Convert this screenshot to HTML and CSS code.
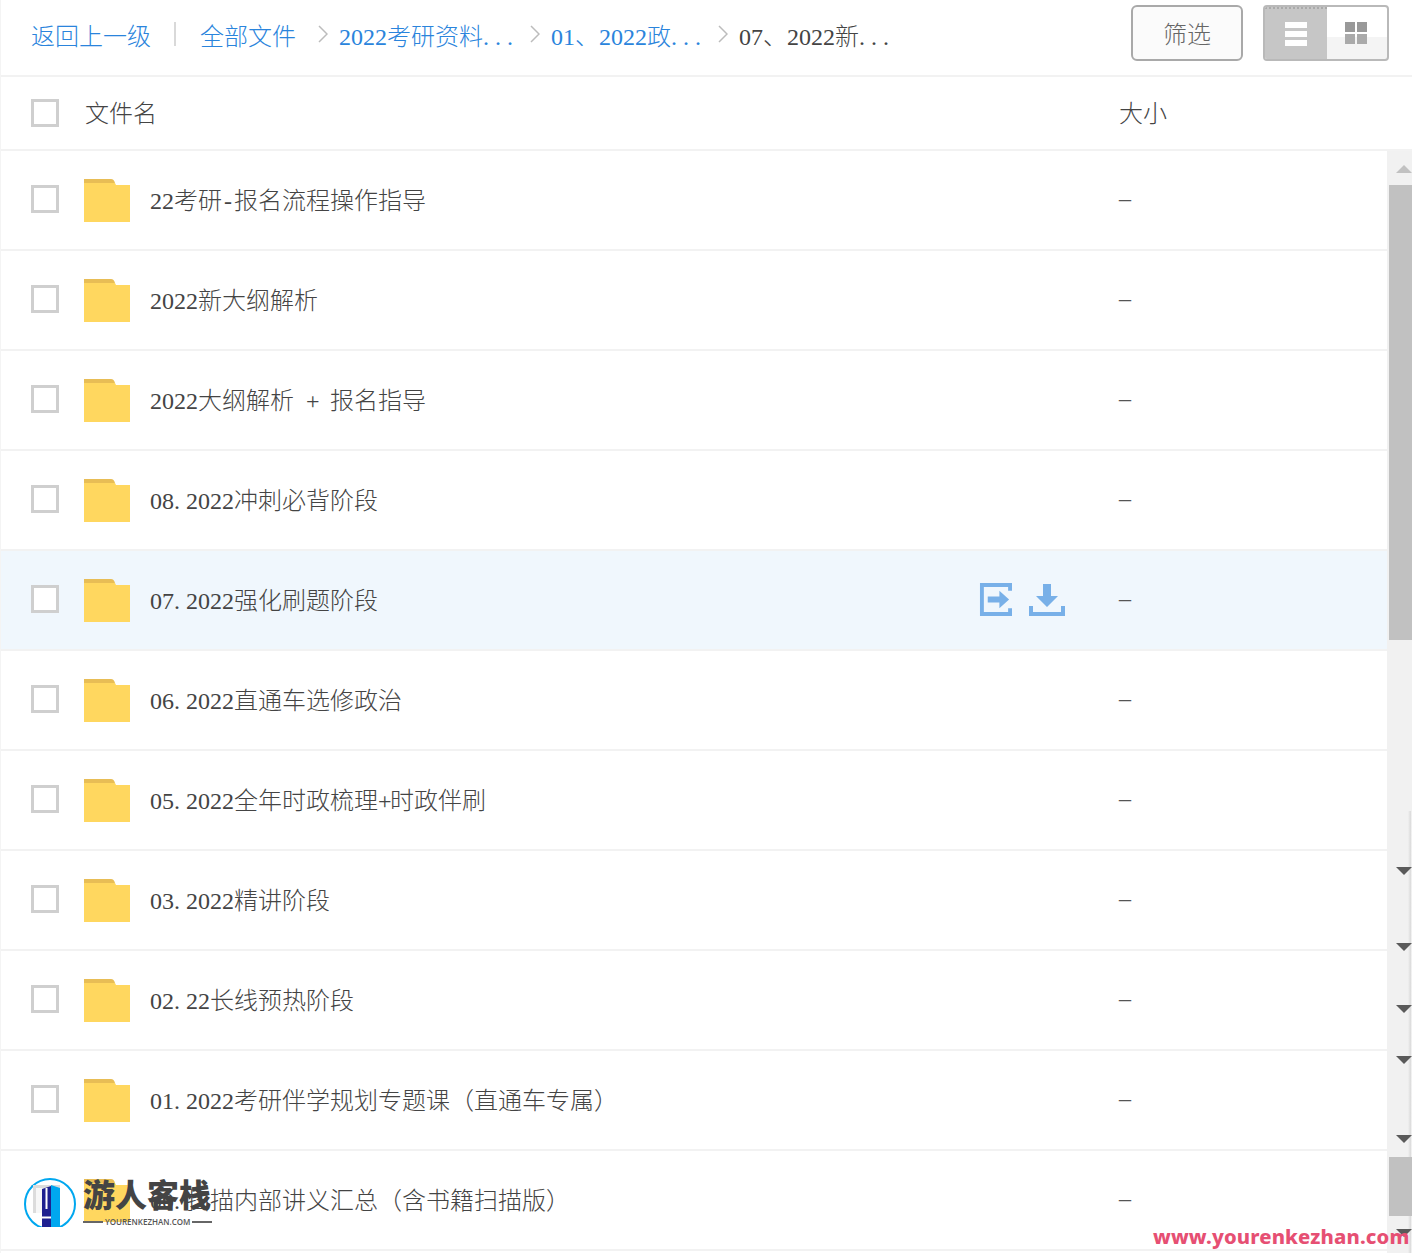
FILE: index.html
```html
<!DOCTYPE html>
<html lang="zh">
<head>
<meta charset="utf-8">
<title>文件列表</title>
<link rel="stylesheet" href="styles.css">
</head>
<body>
<div class="page">
  <header class="toolbar">
    <nav class="crumbs">
      <a class="link">返回上一级</a>
      <span class="sep"></span>
      <a class="link all">全部文件</a>
      <svg class="chev" viewBox="0 0 10 18"><path d="M1 1l8 8-8 8"/></svg>
      <a class="link">2022考研资料<span class="half">.</span><span class="half">.</span><span class="half">.</span></a>
      <svg class="chev" viewBox="0 0 10 18"><path d="M1 1l8 8-8 8"/></svg>
      <a class="link">01、2022政<span class="half">.</span><span class="half">.</span><span class="half">.</span></a>
      <svg class="chev" viewBox="0 0 10 18"><path d="M1 1l8 8-8 8"/></svg>
      <span class="current">07、2022新<span class="half">.</span><span class="half">.</span><span class="half">.</span></span>
    </nav>
    <button class="filter">筛选</button>
    <div class="views">
      <div class="view active">
        <svg viewBox="0 0 24 24" width="24" height="24"><path class="bars" d="M1 0h22v6H1zM1 9h22v6H1zM1 18h22v6H1z"/></svg>
      </div>
      <div class="view">
        <svg class="tile-icon" viewBox="0 0 24 24" width="24" height="24"><path class="tiles" d="M1 1h10v10H1zM13 1h10v10H13z"/><path class="tiles low" d="M1 13h10v10H1zM13 13h10v10H13z"/></svg>
      </div>
    </div>
  </header>
  <div class="head">
    <span class="check"></span>
    <span class="head-name">文件名</span>
    <span class="head-size">大小</span>
  </div>
  <div class="body">
    <main class="list">
      <div class="row"><span class="check"></span><svg class="folder" viewBox="0 0 46 43"><use href="#f"/></svg><span class="name">22考研<span class="half mid">-</span>报名流程操作指导</span><span class="size">–</span></div>
      <div class="row"><span class="check"></span><svg class="folder" viewBox="0 0 46 43"><use href="#f"/></svg><span class="name">2022新大纲解析</span><span class="size">–</span></div>
      <div class="row"><span class="check"></span><svg class="folder" viewBox="0 0 46 43"><use href="#f"/></svg><span class="name wide">2022大纲解析 <span class="half mid">+</span> 报名指导</span><span class="size">–</span></div>
      <div class="row"><span class="check"></span><svg class="folder" viewBox="0 0 46 43"><use href="#f"/></svg><span class="name">08<span class="half">.</span>2022冲刺必背阶段</span><span class="size">–</span></div>
      <div class="row hover"><span class="check"></span><svg class="folder" viewBox="0 0 46 43"><use href="#f"/></svg><span class="name">07<span class="half">.</span>2022强化刷题阶段</span>
        <span class="actions">
          <svg class="act" viewBox="0 0 34 36" width="33" height="35"><path d="M32 9V3H3v30h29v-6" fill="none" stroke="#78b0e8" stroke-width="4"/><path d="M9 15h12V9l10 9-10 9v-6H9z" fill="#78b0e8"/></svg>
          <svg class="act" viewBox="0 0 36 34" width="36" height="34"><path d="M14 1h8v12h7L18 24 7 13h7z" fill="#78b0e8"/><path d="M2 23v8h32v-8" fill="none" stroke="#78b0e8" stroke-width="4"/></svg>
        </span>
        <span class="size">–</span></div>
      <div class="row"><span class="check"></span><svg class="folder" viewBox="0 0 46 43"><use href="#f"/></svg><span class="name">06<span class="half">.</span>2022直通车选修政治</span><span class="size">–</span></div>
      <div class="row"><span class="check"></span><svg class="folder" viewBox="0 0 46 43"><use href="#f"/></svg><span class="name">05<span class="half">.</span>2022全年时政梳理<span class="half mid">+</span>时政伴刷</span><span class="size">–</span></div>
      <div class="row"><span class="check"></span><svg class="folder" viewBox="0 0 46 43"><use href="#f"/></svg><span class="name">03<span class="half">.</span>2022精讲阶段</span><span class="size">–</span></div>
      <div class="row"><span class="check"></span><svg class="folder" viewBox="0 0 46 43"><use href="#f"/></svg><span class="name">02<span class="half">.</span>22长线预热阶段</span><span class="size">–</span></div>
      <div class="row"><span class="check"></span><svg class="folder" viewBox="0 0 46 43"><use href="#f"/></svg><span class="name">01<span class="half">.</span>2022考研伴学规划专题课（直通车专属）</span><span class="size">–</span></div>
      <div class="row"><span class="check"></span><svg class="folder" viewBox="0 0 46 43"><use href="#f"/></svg><span class="name">00<span class="half">.</span>扫描内部讲义汇总（含书籍扫描版）</span><span class="size">–</span></div>
    </main>
    <aside class="scroll">
      <span class="edge"></span>
      <span class="thumb t1"></span>
      <span class="thumb t2"></span>
      <span class="arrow up"></span>
      <span class="arrow d1"></span>
      <span class="arrow d2"></span>
      <span class="arrow d3"></span>
      <span class="arrow d4"></span>
      <span class="arrow d5"></span>
      <span class="arrow d6"></span>
    </aside>
  </div>
  <svg class="defs" width="0" height="0"><defs>
    <g id="f"><path d="M0 0h27q3 0 4 4h-31z" fill="#e8bd55"/><path d="M0 4h31l1 2h14v37H0z" fill="#ffd75f"/></g>
  </defs></svg>
  <div class="mark">
    <svg class="mark-logo" viewBox="0 0 52 50" width="52" height="50">
      <circle cx="26" cy="27" r="25" fill="#fff" stroke="#00a7ef" stroke-width="2"/>
      <rect x="9" y="8" width="27" height="28" fill="#dcdcdc"/>
      <rect x="12" y="11" width="21" height="25" fill="#f7f7f7"/>
      <path d="M18 12l9-3v41h-9z" fill="#1e2090"/>
      <path d="M27 8l9 3v39h-9z" fill="#00a7ef"/>
      <rect x="21.5" y="11" width="2" height="21" fill="#fff"/>
      <rect x="18" y="39.5" width="9" height="2" fill="#fff"/>
    </svg>
    <div class="mark-text">
      <div class="mark-title">游人客栈</div>
      <div class="mark-sub"><i></i><span>YOURENKEZHAN.COM</span><i></i></div>
    </div>
  </div>
  <div class="url">www.yourenkezhan.com</div>
</div>
</body>
</html>
```
FILE: styles.css
```css
* { box-sizing: border-box; }
html, body { margin: 0; padding: 0; }
body {
  width: 1412px; height: 1253px; overflow: hidden; background: #fff;
  font-family: "Liberation Serif", "Noto Sans CJK SC", serif;
  font-size: 24px; color: #444; font-weight: 300;
}
.page { position: relative; width: 1412px; height: 1253px; border-left: 1px solid #f4f4f4; }
.half { display: inline-block; width: 12px; text-align: left; }
.half.mid { text-align: center; }
.wide { word-spacing: 6px; }
.toolbar {
  height: 77px; display: flex; align-items: center;
  border-bottom: 2px solid #f2f2f2; padding: 0 23px 10px 30px;
}
.crumbs { display: flex; align-items: center; flex: 1; white-space: nowrap; padding-top: 3px; }
.link { color: #2a84dc; }
.sep { width: 2px; height: 24px; background: #d9d9d9; margin: 0 24px 0 23px; }
.all { margin-right: 11px; }
.chev { width: 10px; height: 18px; margin: 0 11px; fill: none; stroke: #bcbcbc; stroke-width: 1.5; }
.current { color: #444; }
.filter {
  width: 112px; height: 56px; margin-right: 20px; background: #fbfbfb; color: #666;
  border: 2px solid #a9a9a9; border-radius: 6px; font: inherit;
}
.views {
  display: flex; width: 126px; height: 56px; border: 2px solid #b9b9b9; border-radius: 4px;
  overflow: hidden; background: linear-gradient(#fff 58%, #f4f4f4 58%);
}
.view { flex: 1; display: flex; align-items: center; justify-content: center; }
.view.active { flex: 0 0 62px; background: #c6c6c6; border-top: 2px dotted #aaa; }
.tile-icon { margin-right: 2px; }
.bars { fill: #fff; }
.tiles { fill: #999; }
.tiles.low { fill: #aaa; }
.head {
  height: 74px; display: flex; align-items: center; position: relative;
  border-bottom: 2px solid #f2f2f2; padding-left: 30px;
}
.head-name { margin: 0 0 4px 26px; flex: 0 0 1034px; }
.head-size { margin-bottom: 4px; }
.check {
  flex: none; width: 28px; height: 28px; border: 3px solid #cfcfcf; background: #fff;
}
.body { display: flex; height: 1102px; }
.list { width: 1386px; flex: none; }
.row {
  height: 100px; display: flex; align-items: center; padding: 0 0 2px 30px;
  border-bottom: 2px solid #f2f2f2; position: relative;
}
.row.hover { background: #f0f7fd; }
.folder { flex: none; width: 46px; height: 43px; margin-left: 25px; margin-top: 2px; }
.name { margin-left: 20px; flex: 0 0 969px; white-space: nowrap; margin-bottom: 1px; }
.row.hover .name { flex-basis: 829px; }
.actions { flex: 0 0 140px; display: flex; align-items: center; gap: 17px; margin-top: 1px; }
.size { color: #555; margin-bottom: 2px; }
.scroll { position: relative; flex: 1; background: #f1f1f1; }
.edge { position: absolute; top: 660px; bottom: 0; right: 0; width: 4px; background: linear-gradient(90deg, #f1f1f1, #dcdcdc 60%, #fafafa); }
.thumb { position: absolute; left: 2px; right: 0; background: #c1c1c1; }
.t1 { top: 34px; height: 455px; }
.t2 { top: 1006px; height: 59px; }
.arrow { position: absolute; left: 9px; width: 0; height: 0; border-left: 8px solid transparent; border-right: 8px solid transparent; border-top: 8px solid #5a5a5a; }
.arrow.up { top: 14px; border-top: 0; border-bottom: 8px solid #c1c1c1; }
.d1 { top: 716px; } .d2 { top: 792px; } .d3 { top: 854px; }
.d4 { top: 905px; } .d5 { top: 984px; } .d6 { top: 1078px; }
.defs { position: absolute; }
.mark { position: absolute; left: 23px; top: 1177px; display: flex; gap: 7px; height: 50px; }
.mark-logo { flex: none; }
.mark-title {
  font-weight: 900; font-size: 32px; line-height: 38px; color: #444; margin-bottom: 1px;
}
.mark-sub { display: flex; align-items: center; gap: 2px; font-family: "Open Sans", sans-serif; font-size: 8px; font-weight: 600; color: #555; line-height: 12px; }
.mark-sub i { display: block; width: 20px; height: 2px; background: #666; }
.url {
  position: absolute; left: 1152px; top: 1223px; font-family: "Noto Sans", sans-serif;
  font-weight: 800; font-size: 20.2px; line-height: 26px; letter-spacing: 0.15px; color: #e64f73; white-space: nowrap;
}
```
